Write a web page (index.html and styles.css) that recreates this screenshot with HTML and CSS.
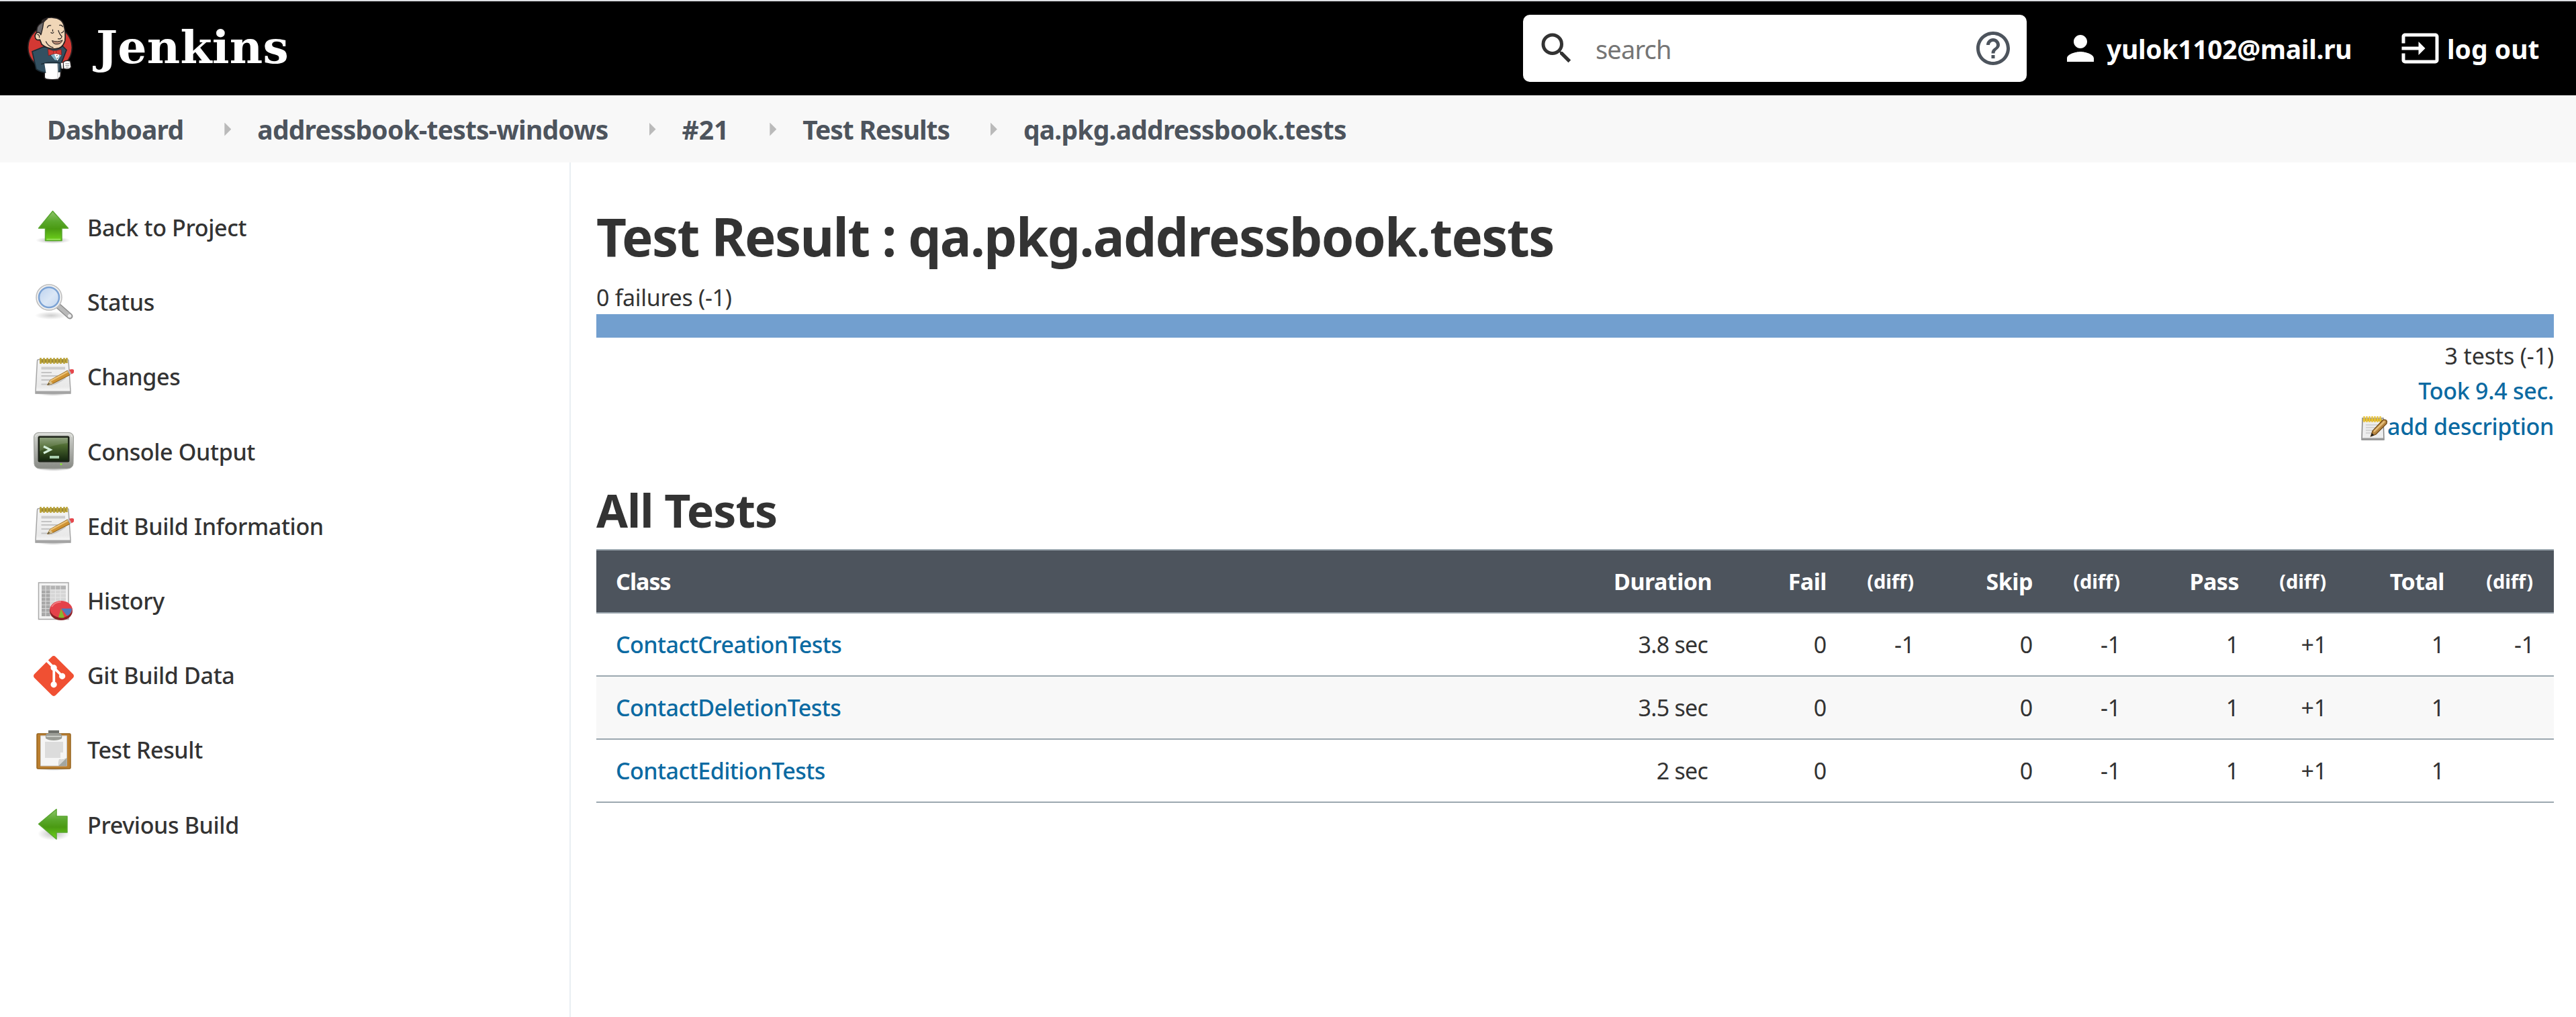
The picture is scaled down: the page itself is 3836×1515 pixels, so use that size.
FILE: index.html
```html
<!DOCTYPE html>
<html lang="en">
<head>
<meta charset="utf-8">
<title>Test Result : qa.pkg.addressbook.tests [Jenkins]</title>
<link rel="stylesheet" href="styles.css">
</head>
<body>
<svg class="defs" width="0" height="0" aria-hidden="true">
  <defs>
    <linearGradient id="green" x1="0" y1="0" x2="0" y2="1"><stop offset="0" stop-color="#8fc46c"/><stop offset=".35" stop-color="#5aa82c"/><stop offset=".6" stop-color="#4a9a12"/><stop offset="1" stop-color="#6fd31c"/></linearGradient>
    <linearGradient id="paper" x1="0" y1="0" x2="0" y2="1"><stop offset="0" stop-color="#f4f4f4"/><stop offset=".8" stop-color="#e9e9e9"/><stop offset="1" stop-color="#fdfdfd"/></linearGradient>
    <linearGradient id="metal" x1="0" y1="0" x2="0" y2="1"><stop offset="0" stop-color="#d3d5d0"/><stop offset="1" stop-color="#888a85"/></linearGradient>
    <linearGradient id="screen" x1="0" y1="0" x2="0" y2="1"><stop offset="0" stop-color="#7d936a"/><stop offset=".35" stop-color="#4d6a30"/><stop offset="1" stop-color="#162810"/></linearGradient>
    <linearGradient id="lens" x1="0" y1="0" x2="1" y2="1"><stop offset="0" stop-color="#bdd2ee"/><stop offset=".55" stop-color="#dbe7f6"/><stop offset="1" stop-color="#c3d6ef"/></linearGradient>
    <radialGradient id="shade"><stop offset="0" stop-color="#000" stop-opacity=".32"/><stop offset="1" stop-color="#000" stop-opacity="0"/></radialGradient>
    <symbol id="notepad" viewBox="0 0 60 60">
      <ellipse cx="29" cy="54" rx="24" ry="4" fill="url(#shade)"/>
      <path d="M5.500 5.500Q5.500 3.500 8 3.500H50Q52 3.500 52 5.500L55 50V54H3V50Z" fill="url(#paper)" stroke="#a4a4a4" stroke-width="1.500"/>
      <path d="M3 50.500H55V54.500H3Z" fill="#a4a4a4"/>
      <path d="M9 3H50V8.500H9Z" fill="#9d8a34"/>
      <path d="M10.500 1V10M15.500 1V10M20.500 1V10M25.500 1V10M30.500 1V10M35.500 1V10M40.500 1V10M45.500 1V10M49.500 1V9" stroke="#bda538" stroke-width="2.500"/>
      <path d="M11.500 16.500H47" stroke="#cdcdcd" stroke-width="4"/>
      <path d="M11.500 23H27M11.500 28H36M11.500 34H30M11.500 40.500H28" stroke="#c4c4c4" stroke-width="2"/>
      <path d="M22 41Q34 40 47 30" fill="none" stroke="#aaa" stroke-width="4" opacity=".5"/>
      <path d="M20.500 41.500 24.500 34.500 50.500 20 54 26.500 28.500 39.500Z" fill="#cf9232" stroke="#8c5f17"/>
      <path d="M25 35.500 51 21.500" stroke="#edc377" stroke-width="2"/>
      <path d="M20.500 41.500 24.500 34.500 28.500 39.500Z" fill="#d9c290"/><path d="M20.500 41.500 22.500 38.500 24.500 40Z" fill="#443"/>
      <path d="M50.500 20 53 18.800 56.500 25.300 54 26.500Z" fill="#b9b9b9"/>
      <path d="M53 18.800Q58 17 60 19V23Q59 24.500 56.500 25.300Z" fill="#e5484d"/>
    </symbol>
  </defs>
</svg>

<header class="page-header">
  <a class="brand">
    <svg class="butler" viewBox="124 70 202 287">
      <ellipse cx="225" cy="210" rx="99" ry="99" fill="#d33833" stroke="#231f20" stroke-width="5"/>
      <path d="M200 345 206 352 262 352 272 340 274 312 200 300Z" fill="#fff" stroke="#231f20" stroke-width="5"/>
      <path d="M193 208 145 228 163 307Q180 320 206 322L270 318 276 280 283 262 299 221 281 203Z" fill="#335061" stroke="#1b2a33" stroke-width="5"/>
      <path d="M185 285Q225 270 274 280" fill="none" stroke="#1b2a33" stroke-width="4"/>
      <path d="M198 212 240 268 262 270 286 215Z" fill="#335061"/>
      <path d="M224 240 246 268H262L279 242 262 232Z" fill="#81b0c4" stroke="#1b2a33" stroke-width="2"/>
      <path d="M242 236 259 270 268 236Z" fill="#fff"/>
      <circle cx="256" cy="246" r="2.500" fill="#333"/><circle cx="258" cy="258" r="2.500" fill="#333"/>
      <path d="M190 88Q208 74 236 75Q282 78 288 114Q296 142 292 180Q280 216 248 216Q214 218 188 196L180 176Q158 180 158 158Q160 140 174 142Z" fill="#f0d6b7" stroke="#231f20" stroke-width="5"/>
      <path d="M190 98Q172 106 167 122L165 142 185 150 192 122 196 96Q206 84 214 80Q196 82 190 98Z" fill="#6d6b6d" stroke="#231f20" stroke-width="4"/>
      <path d="M180 174Q158 180 158 158Q160 142 174 142 182 144 184 154" fill="#f0d6b7" stroke="#231f20" stroke-width="4"/>
      <path d="M167 152Q178 150 177 166M206 182Q216 206 240 210M212 122Q216 108 230 111M266 110Q278 106 283 118M228 142Q238 150 242 140M237 128V138M274 144Q284 144 286 134M262 132Q268 152 278 160Q276 174 260 170" fill="none" stroke="#231f20" stroke-width="3.500"/>
      <path d="M234 179Q258 188 281 177Q274 197 250 195Q238 193 234 179Z" fill="#b98b73" stroke="#231f20" stroke-width="3"/>
      <path d="M216 217 245 226 275 218 277 243 248 236 218 246Z" fill="#d33833" stroke="#7a1512" stroke-width="2"/>
      <ellipse cx="247" cy="231" rx="6" ry="7" fill="#ef3d3a" stroke="#7a1512" stroke-width="2"/>
      <path d="M200 281H258L262 350Q234 355 211 350Z" fill="#fff"/>
      <path d="M260 282V350" stroke="#bbb" stroke-width="3"/>
      <path d="M284 276Q296 264 316 271L320 298Q310 312 286 304Z" fill="#fff" stroke="#231f20" stroke-width="4"/>
      <path d="M274 279H283V305H277Z" fill="#fff"/>
      <path d="M294 282H311M294 290H312M296 298H309" stroke="#555" stroke-width="2"/>
    </svg>
    <span class="wordmark">Jenkins</span>
  </a>
  <div class="search">
    <svg class="ico" viewBox="0 0 24 24"><path fill="#333" d="M15.500 14h-.79l-.28-.27A6.471 6.471 0 0 0 16 9.500 6.500 6.500 0 1 0 9.500 16c1.610 0 3.090-.59 4.230-1.570l.27.28v.79l5 4.990L20.490 19l-4.990-5zm-6 0C7.010 14 5 11.990 5 9.500S7.010 5 9.500 5 14 7.010 14 9.500 11.990 14 9.500 14z"/></svg>
    <span class="placeholder">search</span>
    <svg class="ico" viewBox="0 0 24 24"><path fill="#4d545d" d="M11 18h2v-2h-2v2zm1-16C6.480 2 2 6.480 2 12s4.480 10 10 10 10-4.480 10-10S17.520 2 12 2zm0 18c-4.410 0-8-3.590-8-8s3.590-8 8-8 8 3.590 8 8-3.590 8-8 8zm0-14c-2.210 0-4 1.790-4 4h2c0-1.100.9-2 2-2s2 .9 2 2c0 2-3 1.750-3 5h2c0-2.250 3-2.500 3-5 0-2.210-1.790-4-4-4z"/></svg>
  </div>
  <a class="user">
    <svg class="ico" viewBox="0 0 24 24"><path fill="#fff" d="M12 12c2.210 0 4-1.790 4-4s-1.790-4-4-4-4 1.790-4 4 1.790 4 4 4zm0 2c-2.670 0-8 1.340-8 4v2h16v-2c0-2.660-5.330-4-8-4z"/></svg>
    <span>yulok1102@mail.ru</span>
  </a>
  <a class="logout">
    <svg class="ico" viewBox="0 0 24 24"><path fill="#fff" d="M21 3.010H3c-1.100 0-2 .9-2 2V9h2V4.990h18v14.030H3V15H1v4.010c0 1.100.9 1.980 2 1.980h18c1.100 0 2-.88 2-1.980v-14c0-1.110-.9-2-2-2zM11 16l4-4-4-4v3H1v2h10v3z"/></svg>
    <span>log out</span>
  </a>
</header>

<nav class="breadcrumbs">
  <a>Dashboard</a><i></i><a>addressbook-tests-windows</a><i></i><a class="build">#21</a><i></i><a class="results">Test Results</a><i></i><a>qa.pkg.addressbook.tests</a>
</nav>

<div class="body">
  <aside class="tasks">
    <a class="task">
      <svg viewBox="0 0 60 60"><ellipse cx="29" cy="48" rx="26" ry="5" fill="url(#shade)"/><path d="M28.500 4.500 51.500 30H42V48.500H17.500V30H7.500Z" fill="url(#green)" stroke="#59a52f" stroke-width="1.500" stroke-linejoin="round"/><path d="M19.500 46.500H40" stroke="#a0e668" stroke-width="1.500"/></svg>
      <span>Back to Project</span></a>
    <a class="task">
      <svg viewBox="0 0 60 60"><ellipse cx="26" cy="49" rx="24" ry="6" fill="url(#shade)" opacity=".6"/><path d="M37 35 54 50" stroke="#8d8d8d" stroke-width="9" stroke-linecap="round"/><path d="M37 35 54 50" stroke="#b9b9b9" stroke-width="6" stroke-linecap="round"/><circle cx="53.500" cy="49.500" r="2.500" fill="#eee"/><circle cx="23" cy="22" r="19" fill="#efefef" stroke="#bdbdbd" stroke-width="1.500"/><circle cx="23" cy="22" r="15" fill="url(#lens)" stroke="#7ba2d4" stroke-width="2.500"/></svg>
      <span>Status</span></a>
    <a class="task"><svg><use href="#notepad"/></svg><span>Changes</span></a>
    <a class="task">
      <svg viewBox="0 0 60 60"><ellipse cx="30" cy="55" rx="26" ry="4" fill="url(#shade)"/><path d="M7 1.500H53Q59 2 59.500 8L59 48Q58 55 50 55H10Q2 55 1 48L.5 8Q1 2 7 1.500Z" fill="url(#metal)" stroke="#9a9c97"/><path d="M3 8Q3 4 8 3.500H52Q57 4 57 8" fill="none" stroke="#ecedeb"/><rect x="6.500" y="6.500" width="47" height="39" rx="2.500" fill="#1c2318"/><rect x="9" y="9" width="42" height="34" fill="url(#screen)"/><path d="M9 9H51V17Q30 19 9 29Z" fill="#fff" opacity=".12"/><path d="M15 22 25 27 15 32" fill="none" stroke="#d3eed9" stroke-width="3.200"/><path d="M24 38H38" stroke="#a9cfae" stroke-width="4"/><circle cx="41" cy="48.500" r="1.600" fill="#8ae234"/></svg>
      <span>Console Output</span></a>
    <a class="task"><svg><use href="#notepad"/></svg><span>Edit Build Information</span></a>
    <a class="task">
      <svg viewBox="0 0 60 60"><path d="M7.500 2H52V56.500H7.500Z" fill="#f3f3f3" stroke="#a9a9a9" stroke-width="1.500"/><path d="M12 6.500H48V52H12Z" fill="#d6d6d6"/><path d="M12 6.500H25V52H12Z" fill="#a8a8a8"/><path d="M12 6.500H48V12H12Z" fill="#b3b3b3"/><path d="M12 13H48M12 18.500H48M12 24H48M12 29.500H48M12 35H48M12 40.500H48M12 46H48M18 6.500V52M25 6.500V52M32.500 6.500V52M40 6.500V52" stroke="#efefef" stroke-width="1.200" opacity=".7"/><ellipse cx="41" cy="44" rx="17" ry="14" fill="#8b2226"/><ellipse cx="41" cy="41.500" rx="16.500" ry="12.500" fill="#e4424a"/><path d="M41 40.500 57 40.500Q57 48 50 51.500Z" fill="#4f7bbd"/><path d="M41 40.500 46 54Q41 55 37 53.500Z" fill="#86b82f"/><path d="M27 38Q31 31 41 30.500" fill="none" stroke="#f28a8e" stroke-width="1.500"/></svg>
      <span>History</span></a>
    <a class="task">
      <svg viewBox="0 0 24 24"><path fill="#f05033" d="M23.546 10.930L13.067.452c-.604-.603-1.582-.603-2.188 0L8.708 2.627l2.760 2.760c.645-.215 1.379-.07 1.889.441.516.515.658 1.258.438 1.900l2.658 2.660c.645-.223 1.387-.078 1.900.435.721.72.721 1.884 0 2.604-.719.719-1.881.719-2.600 0-.539-.541-.674-1.337-.404-1.996L12.860 8.955v6.525c.176.086.342.203.488.348.713.721.713 1.883 0 2.600-.719.721-1.889.721-2.609 0-.719-.719-.719-1.879 0-2.598.182-.18.387-.316.605-.406V8.835c-.217-.091-.424-.222-.6-.401-.545-.545-.676-1.342-.396-2.009L7.636 3.700.45 10.881c-.6.605-.6 1.584 0 2.189l10.480 10.477c.604.604 1.582.604 2.186 0l10.430-10.430c.605-.603.605-1.582 0-2.187"/></svg>
      <span>Git Build Data</span></a>
    <a class="task">
      <svg viewBox="0 0 60 60"><ellipse cx="30" cy="57" rx="27" ry="3" fill="url(#shade)"/><rect x="5" y="5" width="50" height="52" rx="1.500" fill="#bb7f2f" stroke="#96631d" stroke-width="1.500"/><path d="M10.500 8H49.500V53H10.500Z" fill="#f5f5f5" stroke="#c8c8c8"/><path d="M17 17H44V33H40V41H17Z" fill="#dcdcdc"/><path d="M37 53 38 43Q43 45 49.500 41V53Z" fill="#a3a6a0"/><path d="M37 53 38 43Q43 45 49.500 41Z" fill="#d8d8d6"/><path d="M22 0H38V5H41Q43 9 42 12Q38 15 30 15Q22 15 18 12Q17 8 19 5H22Z" fill="#9b9d96"/><path d="M22 0H38V4H22Z" fill="#6f716c"/><path d="M19 9H41" stroke="#c9cbc5" stroke-width="2"/></svg>
      <span>Test Result</span></a>
    <a class="task">
      <svg viewBox="0 0 60 60"><ellipse cx="30" cy="43" rx="24" ry="10" fill="url(#shade)" opacity=".8"/><path d="M7.500 28.500 34 6.500V17H50V41H34V51Z" fill="url(#green)" stroke="#59a52f" stroke-width="1.500" stroke-linejoin="round"/></svg>
      <span>Previous Build</span></a>
  </aside>

  <main class="main">
    <h1>Test Result : qa.pkg.addressbook.tests</h1>
    <div class="failures">0 failures (-1)</div>
    <div class="bar"></div>
    <div class="summary">
      <div>3 tests (-1)</div>
      <div><a>Took 9.4 sec.</a></div>
      <div class="describe">
        <svg viewBox="0 0 40 40"><path d="M3 5H34L35 37H2Z" fill="#ededed" stroke="#858585" stroke-width="1.500"/><path d="M2.500 34.500H34.500V38H2.500Z" fill="#9a9a9a"/><path d="M3.500 6H32V9.500H3.500Z" fill="#cda92c"/><path d="M5.500 2V11M9.500 2V11M13.500 2V11M17.500 2V11M21.500 2V11M25.500 2V11M29.500 2V11" stroke="#ecc63a" stroke-width="2.300"/><path d="M8 15H27M8 19H24M8 23H19M8 27H16" stroke="#ccc" stroke-width="1.300"/><path d="M15.500 32 18 24 33.500 7.500Q38 6 39.500 9.500L39 13 23 29Z" fill="#b98742" stroke="#6d4714" stroke-width="1.300"/><path d="M20 25 36 9.500" stroke="#e4bd79" stroke-width="2.500"/><path d="M15.500 32 17 27 20.500 30.500Z" fill="#222"/></svg>
        <a>add description</a>
      </div>
    </div>
    <h2>All Tests</h2>
    <table>
      <colgroup><col class="c-class"><col class="c-dur"><col class="c-fail"><col class="c-diff"><col class="c-num"><col class="c-diff"><col class="c-num"><col class="c-diff"><col class="c-tot"><col class="c-last"></colgroup>
      <thead>
        <tr><th>Class</th><th>Duration</th><th>Fail</th><th class="diff">(diff)</th><th>Skip</th><th class="diff">(diff)</th><th>Pass</th><th class="diff">(diff)</th><th>Total</th><th class="diff">(diff)</th></tr>
      </thead>
      <tbody>
        <tr><td><a>ContactCreationTests</a></td><td class="sec">3.8 sec</td><td>0</td><td>-1</td><td>0</td><td>-1</td><td>1</td><td>+1</td><td>1</td><td>-1</td></tr>
        <tr><td><a>ContactDeletionTests</a></td><td class="sec">3.5 sec</td><td>0</td><td></td><td>0</td><td>-1</td><td>1</td><td>+1</td><td>1</td><td></td></tr>
        <tr><td><a>ContactEditionTests</a></td><td class="sec">2 sec</td><td>0</td><td></td><td>0</td><td>-1</td><td>1</td><td>+1</td><td>1</td><td></td></tr>
      </tbody>
    </table>
  </main>
</div>
</body>
</html>
```
FILE: styles.css
```css
* { box-sizing: border-box; }
body {
  margin: 0;
  height: 1515px;
  overflow: hidden;
  display: flex;
  flex-direction: column;
  background: #fff;
  color: #333;
  font: 34px/52px "Noto Sans", "Open Sans", sans-serif;
  letter-spacing: -0.15px;
}
svg { display: block; flex: none; }
.defs { position: absolute; }

.page-header {
  height: 142px;
  flex: none;
  border-top: 2px solid #dcdee3;
  background: #000;
  color: #fff;
  display: flex;
  align-items: center;
  padding: 0 56px 0 41px;
  font-size: 39px;
  font-weight: 700;
  letter-spacing: -0.3px;
}
.page-header span { padding-top: 2px; }
.ico { width: 60px; height: 60px; }
.brand { display: flex; align-items: center; gap: 40px; margin-right: auto; }
.butler { width: 67px; height: 96px; }
.page-header .wordmark {
  font: 700 68px/80px "DejaVu Serif", serif;
  letter-spacing: 0.2px;
  padding: 0 0 4px;
  margin-left: -5px;
}
.search {
  width: 750px;
  height: 100px;
  border-radius: 10px;
  background: #fff;
  display: flex;
  align-items: center;
  padding: 0 20px;
}
.search .placeholder {
  flex: 1;
  padding-left: 28px;
  color: #757575;
  font-size: 38px;
  font-weight: 400;
  letter-spacing: -0.83px;
}
.user, .logout { display: flex; align-items: center; white-space: nowrap; }
.user { width: 506px; margin-left: 50px; gap: 9px; }
.logout { width: 206px; gap: 10px; }
.logout span { letter-spacing: 0; }

.breadcrumbs {
  height: 100px;
  flex: none;
  background: #f8f8f8;
  color: #4d545d;
  display: flex;
  align-items: center;
  padding: 1px 0 0 70px;
  font-size: 39px;
  font-weight: 700;
  letter-spacing: -0.8px;
}
.breadcrumbs .build { letter-spacing: 0; }
.breadcrumbs .results { letter-spacing: -1.09px; }
.breadcrumbs i {
  width: 10px;
  height: 20px;
  margin: 0 39px 0 61px;
  background: #bababa;
  clip-path: polygon(0 0, 100% 50%, 0 100%);
}

.body { flex: 1; display: flex; }
.tasks {
  width: 850px;
  flex: none;
  border-right: 2px solid #e9eef2;
  padding: 42px 0 0 50px;
}
.task {
  display: flex;
  align-items: center;
  gap: 20px;
  height: 111.2px;
  font-weight: 500;
  letter-spacing: -0.35px;
}
.task svg { width: 60px; height: 60px; }
.task span { padding-bottom: 1px; }

.main { flex: 1; padding: 60px 33px 0 38px; }
h1, h2 { margin: 0; font-weight: 700; }
h1 { font-size: 78px; line-height: 100px; letter-spacing: -1.6px; }
.failures { margin-top: 16px; line-height: 50px; letter-spacing: -0.3px; }
.bar { height: 35px; background: #729fcf; }
.summary { padding-top: 1px; text-align: right; line-height: 52.3px; }
.describe { display: flex; justify-content: flex-end; }
.describe svg { width: 40px; height: 40px; margin-top: 9px; }
.main a { color: #0b6aa2; font-weight: 500; letter-spacing: -0.25px; }
.main .describe a { letter-spacing: -0.35px; }
h2 { margin-top: 54px; font-size: 68px; line-height: 90px; letter-spacing: -1px; }

table {
  width: 2915px;
  margin-top: 13px;
  table-layout: fixed;
  border-spacing: 0;
}
.c-dur { width: 200px; }
.c-fail { width: 177px; }
.c-diff { width: 131px; }
.c-num { width: 176px; }
.c-tot { width: 175px; }
.c-last { width: 133px; }
th, td {
  height: 94px;
  padding: 1px 30px 0;
  border-bottom: 2px solid #9ba7af;
  text-align: right;
  white-space: nowrap;
}
th {
  height: 96px;
  border-top: 2px solid #9ba7af;
  background: #4d545d;
  color: #fff;
  font-weight: 700;
  letter-spacing: -0.5px;
}
th:nth-child(2) { padding-right: 34px; }
th:first-child { letter-spacing: -0.95px; }
th.diff { padding-right: 31px; font-size: 29px; letter-spacing: -0.08px; }
th:first-child, td:first-child { text-align: left; padding-left: 29px; }
td.sec { letter-spacing: -0.75px; }
td:last-child { padding-right: 29px; }
tbody tr:nth-child(even) { background: #f8f8f8; }
.main tbody a { letter-spacing: -0.52px; }
```
